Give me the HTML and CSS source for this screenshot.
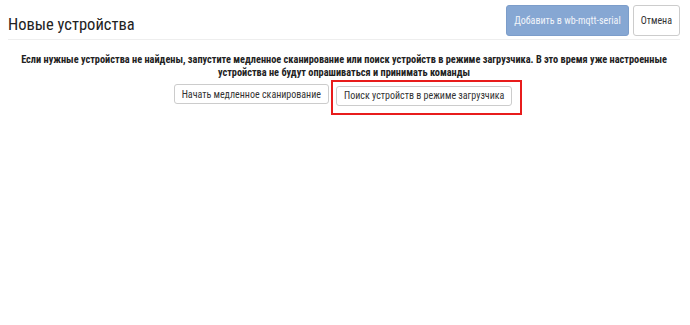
FILE: index.html
```html
<!DOCTYPE html>
<html lang="ru">
<head>
<meta charset="UTF-8">
<title>Новые устройства</title>
<link rel="stylesheet" href="styles.css">
</head>
<body>
	<div class="page">
		<div class="page-header">
			<h1 class="title">Новые устройства</h1>
			<div class="actions">
				<button class="btn btn-primary" disabled>Добавить в wb-mqtt-serial</button>
				<button class="btn">Отмена</button>
			</div>
		</div>
		<p class="hint">Если нужные устройства не найдены, запустите медленное сканирование или поиск устройств в режиме загрузчика. В это время уже настроенные устройства не будут опрашиваться и принимать команды</p>
		<div class="scan-buttons">
			<button class="btn">Начать медленное сканирование</button>
			<div class="marked">
				<button class="btn">Поиск устройств в режиме загрузчика</button>
			</div>
		</div>
	</div>
</body>
</html>
```

FILE: styles.css
```css
*{margin: 0; padding: 0; box-sizing: border-box;}
html{height: 100%;}
body{
	min-height: 100%;
	font-family: Roboto, "Liberation Sans", sans-serif;
	font-stretch: 75%;
	color: #222;
	background: #fff;
}
.page{padding: 0 10px 40px 8px;}
.page-header{
	display: flex;
	justify-content: space-between;
	align-items: flex-start;
	height: 40px;
	border-bottom: 1px solid #eee;
}
.title{font-size: 16.5px; line-height: 20px; font-weight: 400; color: #222; padding-top: 15px;}
.actions{display: flex; gap: 4px; margin-top: 5px;}
.btn{
	font-family: inherit;
	font-stretch: inherit;
	font-size: 10px;
	color: #333;
	background: #fff;
	border: 1px solid #ccc;
	border-radius: 3px;
	padding: 0 7px;
	height: 20px;
	cursor: pointer;
}
.actions .btn{height: 31px;}
.btn-primary{background: #86a7d3; border-color: #7c9dca; color: #f2f5fa;}
.hint{
	text-align: center;
	font-size: 10.3px;
	font-weight: 700;
	line-height: 13px;
	margin: 13px 4px 0 4px;
}
.scan-buttons{display: flex; justify-content: center; gap: 7px; margin-top: 5px; padding-right: 2px;}
.marked{
	border: 2px solid #e81c1c;
	padding: 2px 8px 7px 3px;
	margin: -4px -10px -9px -5px;
}
```
